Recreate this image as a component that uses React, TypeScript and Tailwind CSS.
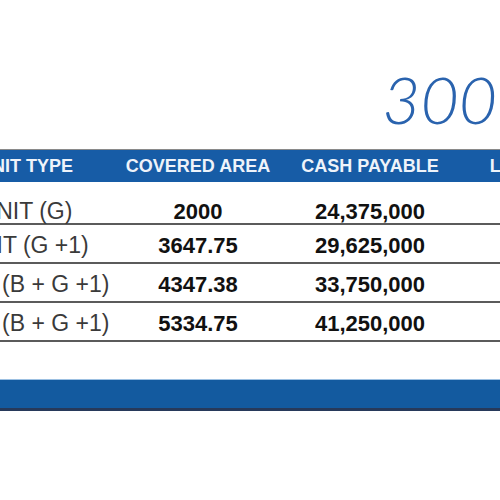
const rows = [
  { type: "UNIT (G)", area: "2000", cash: "24,375,000" },
  { type: "UNIT (G +1)", area: "3647.75", cash: "29,625,000" },
  { type: "UNIT (B + G +1)", area: "4347.38", cash: "33,750,000" },
  { type: "UNIT (B + G +1)", area: "5334.75", cash: "41,250,000" },
];

export default function App() {
  return (
    <div className="h-[500px] w-[500px] overflow-hidden bg-white font-['Liberation_Sans',Arial,sans-serif]">
      <div className="flex h-[149px] justify-end pr-[3px] pt-[66px]">
        <span className="font-['Lato','Open_Sans',sans-serif] text-[66px] font-light italic leading-none text-[#2a63ae]">
          300
        </span>
      </div>

      <div className="-ml-[60px] w-[676px]">
        <div className="grid h-[33px] grid-cols-[172px_172px_172px_160px] items-center border-t border-[#8a8a8a] bg-[#175ca6] text-center text-[18px] font-bold text-[#eef3fa]">
          <div className="whitespace-nowrap">UNIT TYPE</div>
          <div className="whitespace-nowrap">COVERED AREA</div>
          <div className="whitespace-nowrap">CASH PAYABLE</div>
          <div className="whitespace-nowrap">LOCATION</div>
        </div>

        {rows.map((row, i) => (
          <div
            key={i}
            className={`grid grid-cols-[172px_172px_172px_160px] items-center border-b-2 border-[#5b5b5b] text-center ${
              i === 0 ? "h-[43px] pt-[12px]" : "h-[39px] pt-[3px]"
            }`}
          >
            <div className="whitespace-nowrap text-[23px] text-[#3a3a3a]">{row.type}</div>
            <div className="whitespace-nowrap text-[22px] font-bold text-[#111]">{row.area}</div>
            <div className="whitespace-nowrap text-[22px] font-bold text-[#111]">{row.cash}</div>
            <div />
          </div>
        ))}
      </div>

      <div className="mt-[37px] h-[32px] border-t border-b-[3px] border-t-[#9cc0e2] border-b-[#27395a] bg-[#135a9f]" />
    </div>
  );
}
